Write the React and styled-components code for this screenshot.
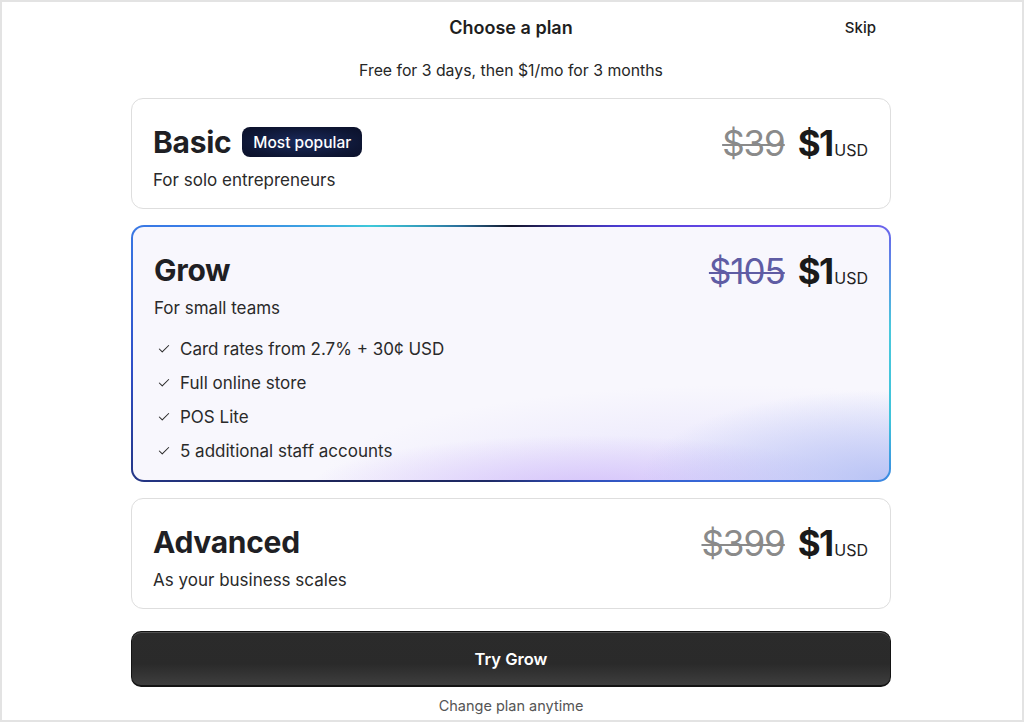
import React from 'react'
import styled, { createGlobalStyle } from 'styled-components'
import { Check } from 'lucide-react'

const GlobalStyle = createGlobalStyle`
  html, body {
    margin: 0;
    padding: 0;
    background: #ffffff;
  }
  body {
    font-family: Inter, "Noto Sans", "Liberation Sans", sans-serif;
    color: #222;
    -webkit-font-smoothing: antialiased;
  }
  * { box-sizing: border-box; }
`

const Frame = styled.div`
  width: 1024px;
  height: 722px;
  border: 2px solid #e3e3e3;
  overflow: hidden;
`

const Column = styled.div`
  width: 760px;
  margin: 0 0 0 129px;
  display: flex;
  flex-direction: column;
`

const Header = styled.div`
  display: grid;
  grid-template-columns: 1fr auto 1fr;
  align-items: center;
  height: 50px;
`

const Heading = styled.div`
  grid-column: 2;
  font-size: 18px;
  font-weight: 600;
  color: #1e1e1e;
`

const Skip = styled.div`
  justify-self: end;
  margin-right: 15px;
  font-size: 15px;
  font-weight: 500;
  color: #1e1e1e;
`

const Subtitle = styled.div`
  margin-top: 9px;
  text-align: center;
  font-size: 15.8px;
  line-height: 20px;
  color: #262626;
`

const Plans = styled.div`
  margin-top: 17px;
  display: flex;
  flex-direction: column;
  gap: 16px;
`

const Card = styled.div`
  border: 1px solid #dedede;
  border-radius: 12px;
  background: #fff;
  padding: 26px 22px 16px 21px;
`

const FancyBorder = styled.div`
  border-radius: 13px;
  padding: 2px;
  background: conic-gradient(
    from 0deg at 50% 50%,
    #121428 0deg,
    #4a3bd0 40deg,
    #6f4bef 68deg,
    #4ac8dc 86deg,
    #3fc3da 100deg,
    #3a72e4 112deg,
    #2f4db8 150deg,
    #1e2a66 190deg,
    #1c2458 240deg,
    #2f4fc8 268deg,
    #3a7ee8 292deg,
    #3ec9da 312deg,
    #2a6f9a 338deg,
    #121428 360deg
  );
`

const FancyInner = styled.div`
  border-radius: 11px;
  padding: 26px 21px 17px 21px;
  background:
    radial-gradient(ellipse 240px 90px at 99% 100%, rgba(180, 192, 244, 0.9), rgba(180, 192, 244, 0) 100%),
    radial-gradient(ellipse 280px 55px at 60% 104%, rgba(210, 190, 250, 0.9), rgba(210, 190, 250, 0) 100%),
    radial-gradient(ellipse 420px 100px at 80% 102%, rgba(226, 222, 252, 0.85), rgba(226, 222, 252, 0) 100%),
    #f8f7fd;
`

const TopRow = styled.div`
  display: flex;
  align-items: center;
  justify-content: space-between;
  height: 34px;
`

const NameGroup = styled.div`
  display: flex;
  align-items: center;
  gap: 11px;
`

const Name = styled.div`
  font-size: 30px;
  font-weight: 700;
  letter-spacing: -0.01em;
  color: #1f1f24;
  line-height: 34px;
`

const Badge = styled.div`
  height: 30px;
  padding: 0 11px;
  display: flex;
  align-items: center;
  border-radius: 8px;
  font-size: 15.5px;
  font-weight: 500;
  color: #fff;
  background: radial-gradient(ellipse at 50% 50%, #1a2a5c 0%, #0e1634 70%, #0b1029 100%);
`

const Price = styled.div`
  display: flex;
  align-items: baseline;
  margin-top: 2px;
`

const OldPrice = styled.span`
  font-size: 35px;
  font-weight: 400;
  letter-spacing: -0.03em;
  color: ${p => p.$tint || '#8a8a8a'};
  text-decoration: line-through;
  text-decoration-thickness: 2px;
  margin-right: 13px;
`

const NewPrice = styled.span`
  font-size: 35px;
  font-weight: 700;
  letter-spacing: -0.05em;
  color: #1a1a1a;
`

const Currency = styled.span`
  margin-left: 2px;
  font-size: 16px;
  color: #222;
`

const Tagline = styled.div`
  margin-top: 9px;
  font-size: 17px;
  line-height: 24px;
  color: #2a2a2a;
`

const Features = styled.ul`
  list-style: none;
  margin: 17px 0 0 0;
  padding: 0 0 0 3px;
  display: flex;
  flex-direction: column;
  gap: 10px;
`

const Feature = styled.li`
  display: flex;
  align-items: center;
  gap: 9px;
  font-size: 17px;
  line-height: 24px;
  color: #2a2a2a;
`

const TryButton = styled.button`
  margin-top: 22px;
  height: 56px;
  width: 100%;
  border: 1px solid #141414;
  border-bottom-width: 2px;
  border-radius: 10px;
  background: linear-gradient(180deg, #2b2b2b 0%, #2a2a2a 60%, #3e3e3e 100%);
  box-shadow: inset 0 1px 0 rgba(255, 255, 255, 0.18);
  color: #fff;
  font-family: inherit;
  font-size: 16.5px;
  font-weight: 600;
  cursor: pointer;
`

const Footnote = styled.div`
  margin-top: 9px;
  text-align: center;
  font-size: 14.5px;
  line-height: 20px;
  color: #555;
`

const plans = [
  { name: 'Basic', badge: 'Most popular', old: '$39', tagline: 'For solo entrepreneurs' },
  {
    name: 'Grow',
    old: '$105',
    tagline: 'For small teams',
    featured: true,
    features: ['Card rates from 2.7% + 30¢ USD', 'Full online store', 'POS Lite', '5 additional staff accounts'],
  },
  { name: 'Advanced', old: '$399', tagline: 'As your business scales' },
]

function PlanBody({ plan }) {
  return (
    <>
      <TopRow>
        <NameGroup>
          <Name>{plan.name}</Name>
          {plan.badge && <Badge>{plan.badge}</Badge>}
        </NameGroup>
        <Price>
          <OldPrice $tint={plan.featured ? '#5f5ca4' : null}>{plan.old}</OldPrice>
          <NewPrice>$1</NewPrice>
          <Currency>USD</Currency>
        </Price>
      </TopRow>
      <Tagline>{plan.tagline}</Tagline>
      {plan.features && (
        <Features>
          {plan.features.map(f => (
            <Feature key={f}>
              <Check size={14} strokeWidth={1.8} color="#2a2a2a" />
              {f}
            </Feature>
          ))}
        </Features>
      )}
    </>
  )
}

export default function App() {
  return (
    <Frame>
      <GlobalStyle />
      <Column>
        <Header>
          <Heading>Choose a plan</Heading>
          <Skip>Skip</Skip>
        </Header>
        <Subtitle>Free for 3 days, then $1/mo for 3 months</Subtitle>
        <Plans>
          {plans.map(plan =>
            plan.featured ? (
              <FancyBorder key={plan.name}>
                <FancyInner>
                  <PlanBody plan={plan} />
                </FancyInner>
              </FancyBorder>
            ) : (
              <Card key={plan.name}>
                <PlanBody plan={plan} />
              </Card>
            )
          )}
        </Plans>
        <TryButton>Try Grow</TryButton>
        <Footnote>Change plan anytime</Footnote>
      </Column>
    </Frame>
  )
}
